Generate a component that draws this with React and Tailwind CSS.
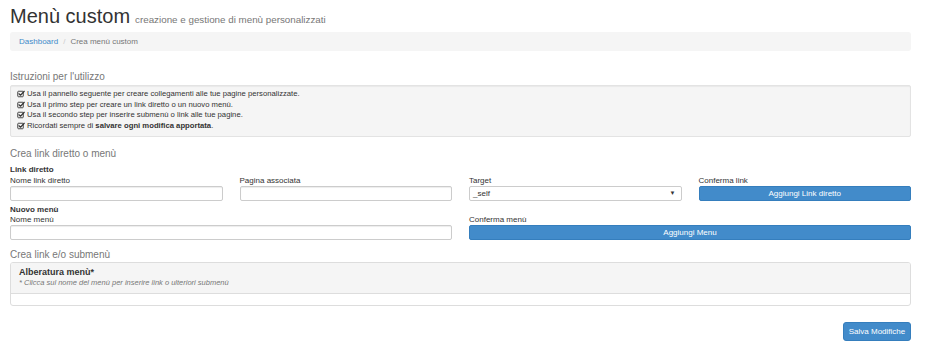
import React from "react";

function CheckIcon() {
  return (
    <svg width="8" height="8" viewBox="0 0 16 16" className="mr-[2px] shrink-0" fill="none">
      <rect x="1.5" y="2.5" width="11" height="11" rx="1.5" stroke="#333" strokeWidth="1.8" />
      <path d="M4 7.5 L7 10.5 L14.5 2.5" stroke="#333" strokeWidth="2.2" strokeLinecap="round" strokeLinejoin="round" />
    </svg>
  );
}

const lines = [
  <>Usa il pannello seguente per creare collegamenti alle tue pagine personalizzate.</>,
  <>Usa il primo step per creare un link diretto o un nuovo menù.</>,
  <>Usa il secondo step per inserire submenù o link alle tue pagine.</>,
  <>Ricordati sempre di <b className="font-bold">salvare ogni modifica apportata</b>.</>,
];

function Label({ children }) {
  return <div className="text-[8px] leading-[10px] text-[#333]">{children}</div>;
}

function Input() {
  return <div className="h-[15px] rounded-[2px] border border-[#ccc] bg-white shadow-[inset_0_1px_1px_rgba(0,0,0,0.075)]" />;
}

function Btn({ children }) {
  return (
    <div className="flex h-[15px] items-center justify-center rounded-[2px] border border-[#357ebd] bg-[#428bca] text-[8px] text-white">
      {children}
    </div>
  );
}

export default function App() {
  return (
    <div
      className="h-[350px] w-[926px] bg-white pl-[10px] pr-[15px] text-[#333]"
      style={{ fontFamily: '"Liberation Sans", Arial, sans-serif' }}
    >
      <div className="flex items-baseline pt-[5px]">
        <h1 className="text-[20px] leading-[23px] text-[#333]">Menù custom</h1>
        <span className="ml-[5px] text-[9.8px] text-[#777]">creazione e gestione di menù personalizzati</span>
      </div>
      <div className="mt-[4px] flex h-[19px] items-center rounded-[3px] bg-[#f5f5f5] pl-[9px] text-[8px]">
        <span className="text-[#428bca]">Dashboard</span>
        <span className="px-[5px] text-[#ccc]">/</span>
        <span className="text-[#777]">Crea menù custom</span>
      </div>

      <div className="mt-[20px] text-[10px] leading-[12px] text-[#777]">Istruzioni per l'utilizzo</div>
      <div className="mt-[2px] rounded-[2px] border border-[#e3e3e3] bg-[#f5f5f5] pb-[5px] pl-[6px] pt-[3px] shadow-[inset_0_1px_1px_rgba(0,0,0,0.05)]">
        {lines.map((l, i) => (
          <div key={i} className="flex items-center text-[7.7px] leading-[10.5px] text-[#333]">
            <CheckIcon />
            <span>{l}</span>
          </div>
        ))}
      </div>

      <div className="mt-[11px] text-[10px] leading-[12px] text-[#777]">Crea link diretto o menù</div>
      <div className="mt-[4px] text-[8px] font-bold leading-[11px]">Link diretto</div>
      <div className="mt-[1px] grid grid-cols-4 gap-x-[17px]">
        <div>
          <Label>Nome link diretto</Label>
          <Input />
        </div>
        <div>
          <Label>Pagina associata</Label>
          <Input />
        </div>
        <div>
          <Label>Target</Label>
          <div className="flex h-[15px] items-center justify-between rounded-[2px] border border-[#ccc] bg-white pl-[3px] pr-[5px] text-[8px]">
            <span>_self</span>
            <span className="text-[6px] text-[#333]">▼</span>
          </div>
        </div>
        <div>
          <Label>Conferma link</Label>
          <Btn>Aggiungi Link diretto</Btn>
        </div>
      </div>

      <div className="mt-[3px] text-[8px] font-bold leading-[11px]">Nuovo menù</div>
      <div className="grid grid-cols-2 gap-x-[17px]">
        <div>
          <Label>Nome menù</Label>
          <Input />
        </div>
        <div>
          <Label>Conferma menù</Label>
          <Btn>Aggiungi Menu</Btn>
        </div>
      </div>

      <div className="mt-[9px] text-[10px] leading-[12px] text-[#777]">Crea link e/o submenù</div>
      <div className="mt-[1px] overflow-hidden rounded-[3px] border border-[#ddd] bg-white">
        <div className="h-[31px] border-b border-[#ddd] bg-[#f5f5f5] pl-[8px] pt-[4px]">
          <div className="text-[9px] font-bold leading-[11px] text-[#333]">Alberatura menù*</div>
          <div className="text-[7.5px] italic leading-[10px] text-[#777]">* Clicca sul nome del menù per inserire link o ulteriori submenù</div>
        </div>
        <div className="h-[11px]" />
      </div>

      <div className="mt-[16px] flex justify-end">
        <div className="flex h-[19px] w-[68px] items-center justify-center rounded-[3px] border border-[#357ebd] bg-[#428bca] text-[8px] text-white">
          Salva Modifiche
        </div>
      </div>
    </div>
  );
}
